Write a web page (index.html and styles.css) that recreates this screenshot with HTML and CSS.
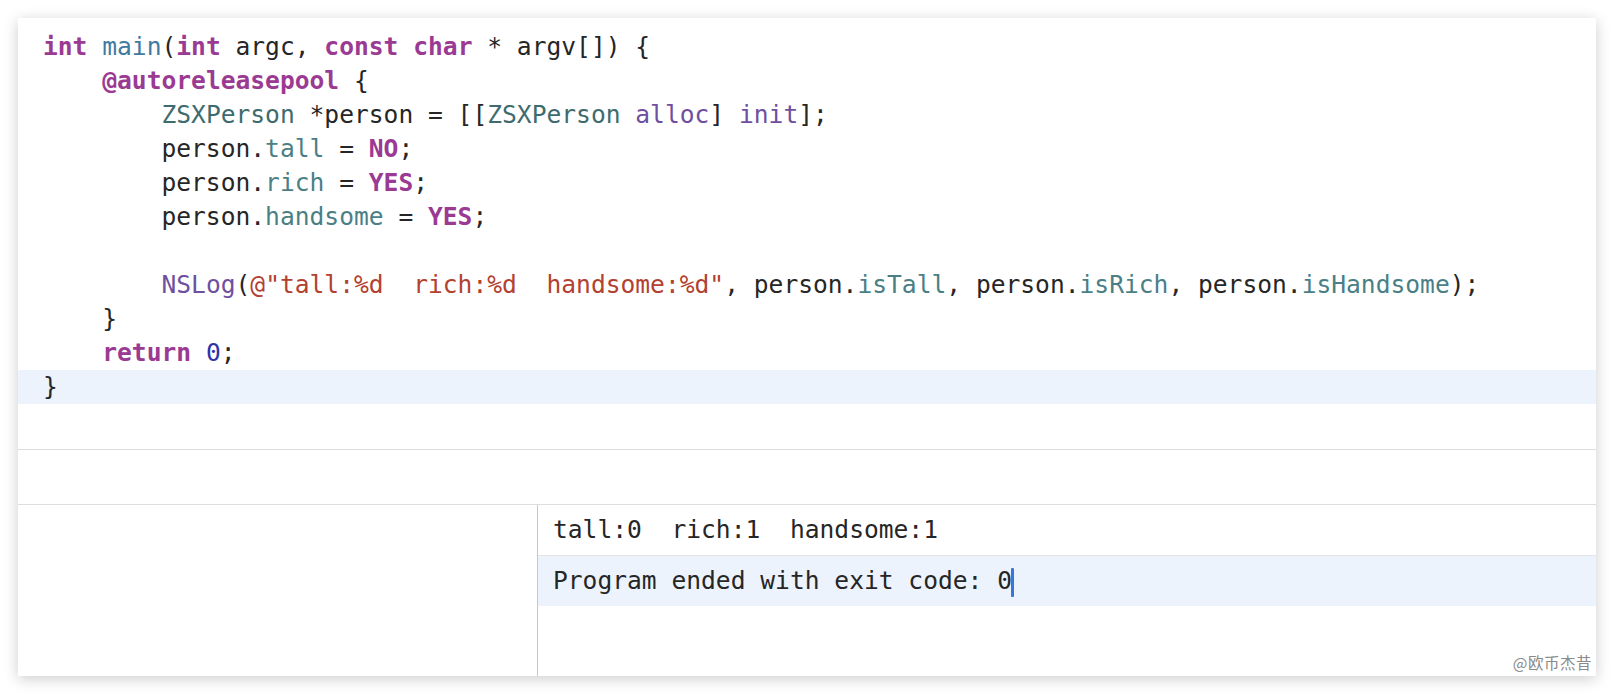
FILE: index.html
```html
<!DOCTYPE html>
<html>
<head>
<meta charset="utf-8">
<link rel="stylesheet" href="styles.css">
</head>
<body>
<div class="window">
  <div class="editor">
<div class="line"><span class="kw">int</span> <span class="fn">main</span>(<span class="kw">int</span> argc, <span class="kw">const</span> <span class="kw">char</span> * argv[]) {</div>
<div class="line">    <span class="kw">@autoreleasepool</span> {</div>
<div class="line">        <span class="cls">ZSXPerson</span> *person = [[<span class="cls">ZSXPerson</span> <span class="sys">alloc</span>] <span class="sys">init</span>];</div>
<div class="line">        person.<span class="prop">tall</span> = <span class="kw">NO</span>;</div>
<div class="line">        person.<span class="prop">rich</span> = <span class="kw">YES</span>;</div>
<div class="line">        person.<span class="prop">handsome</span> = <span class="kw">YES</span>;</div>
<div class="line"> </div>
<div class="line">        <span class="sys">NSLog</span>(<span class="str">@"tall:%d  rich:%d  handsome:%d"</span>, person.<span class="prop">isTall</span>, person.<span class="prop">isRich</span>, person.<span class="prop">isHandsome</span>);</div>
<div class="line">    }</div>
<div class="line">    <span class="kw">return</span> <span class="num">0</span>;</div>
<div class="line current">}</div>
  </div>
  <div class="bar"></div>
  <div class="debug">
    <div class="vars"></div>
    <div class="console">
      <div class="out">tall:0  rich:1  handsome:1</div>
      <div class="out active">Program ended with exit code: 0<span class="caret"></span></div>
    </div>
  </div>
  <div class="mark">@欧币杰昔</div>
</div>
</body>
</html>
```

FILE: styles.css
```css
html, body {
  margin: 0;
  background: #ffffff;
}
body {
  padding: 18px;
}
.window {
  position: relative;
  width: 1578px;
  height: 658px;
  background: #fff;
  box-shadow: 0 3px 14px rgba(0, 0, 0, 0.2);
  display: flex;
  flex-direction: column;
  font-family: "DejaVu Sans Mono", monospace;
  color: #262626;
}
.editor {
  height: 419px;
  padding-top: 12px;
  border-bottom: 1px solid #dedede;
  font-size: 24.6px;
  flex: none;
}
.line {
  height: 34px;
  line-height: 34px;
  padding-left: 25px;
  white-space: pre;
}
.line.current {
  background: #ecf3fd;
}
.kw { color: #9b3a93; font-weight: bold; }
.fn { color: #3f7ba1; }
.cls { color: #3d6b6e; }
.prop { color: #4a7f86; }
.sys { color: #6f4fa0; }
.str { color: #b2412f; }
.num { color: #2f33a6; }
.bar {
  height: 54px;
  border-bottom: 1px solid #dedede;
  flex: none;
}
.debug {
  flex: 1;
  display: flex;
}
.vars {
  width: 519px;
  border-right: 1px solid #c8c8c8;
}
.console {
  flex: 1;
  font-size: 24.6px;
}
.out {
  height: 50px;
  line-height: 50px;
  padding-left: 15px;
  white-space: pre;
}
.out:first-child {
  border-bottom: 1px solid #e4e4e4;
}
.out.active {
  background: #ecf3fd;
}
.caret {
  display: inline-block;
  width: 3px;
  height: 29px;
  background: #3a76d8;
  vertical-align: middle;
  margin-left: -1px;
  border-radius: 1px;
}
.mark {
  position: absolute;
  right: 4px;
  bottom: 3px;
  font-family: "Noto Sans CJK SC", "Noto Sans", sans-serif;
  font-size: 15.5px;
  color: #8a8a8a;
  letter-spacing: 0.5px;
}
```
